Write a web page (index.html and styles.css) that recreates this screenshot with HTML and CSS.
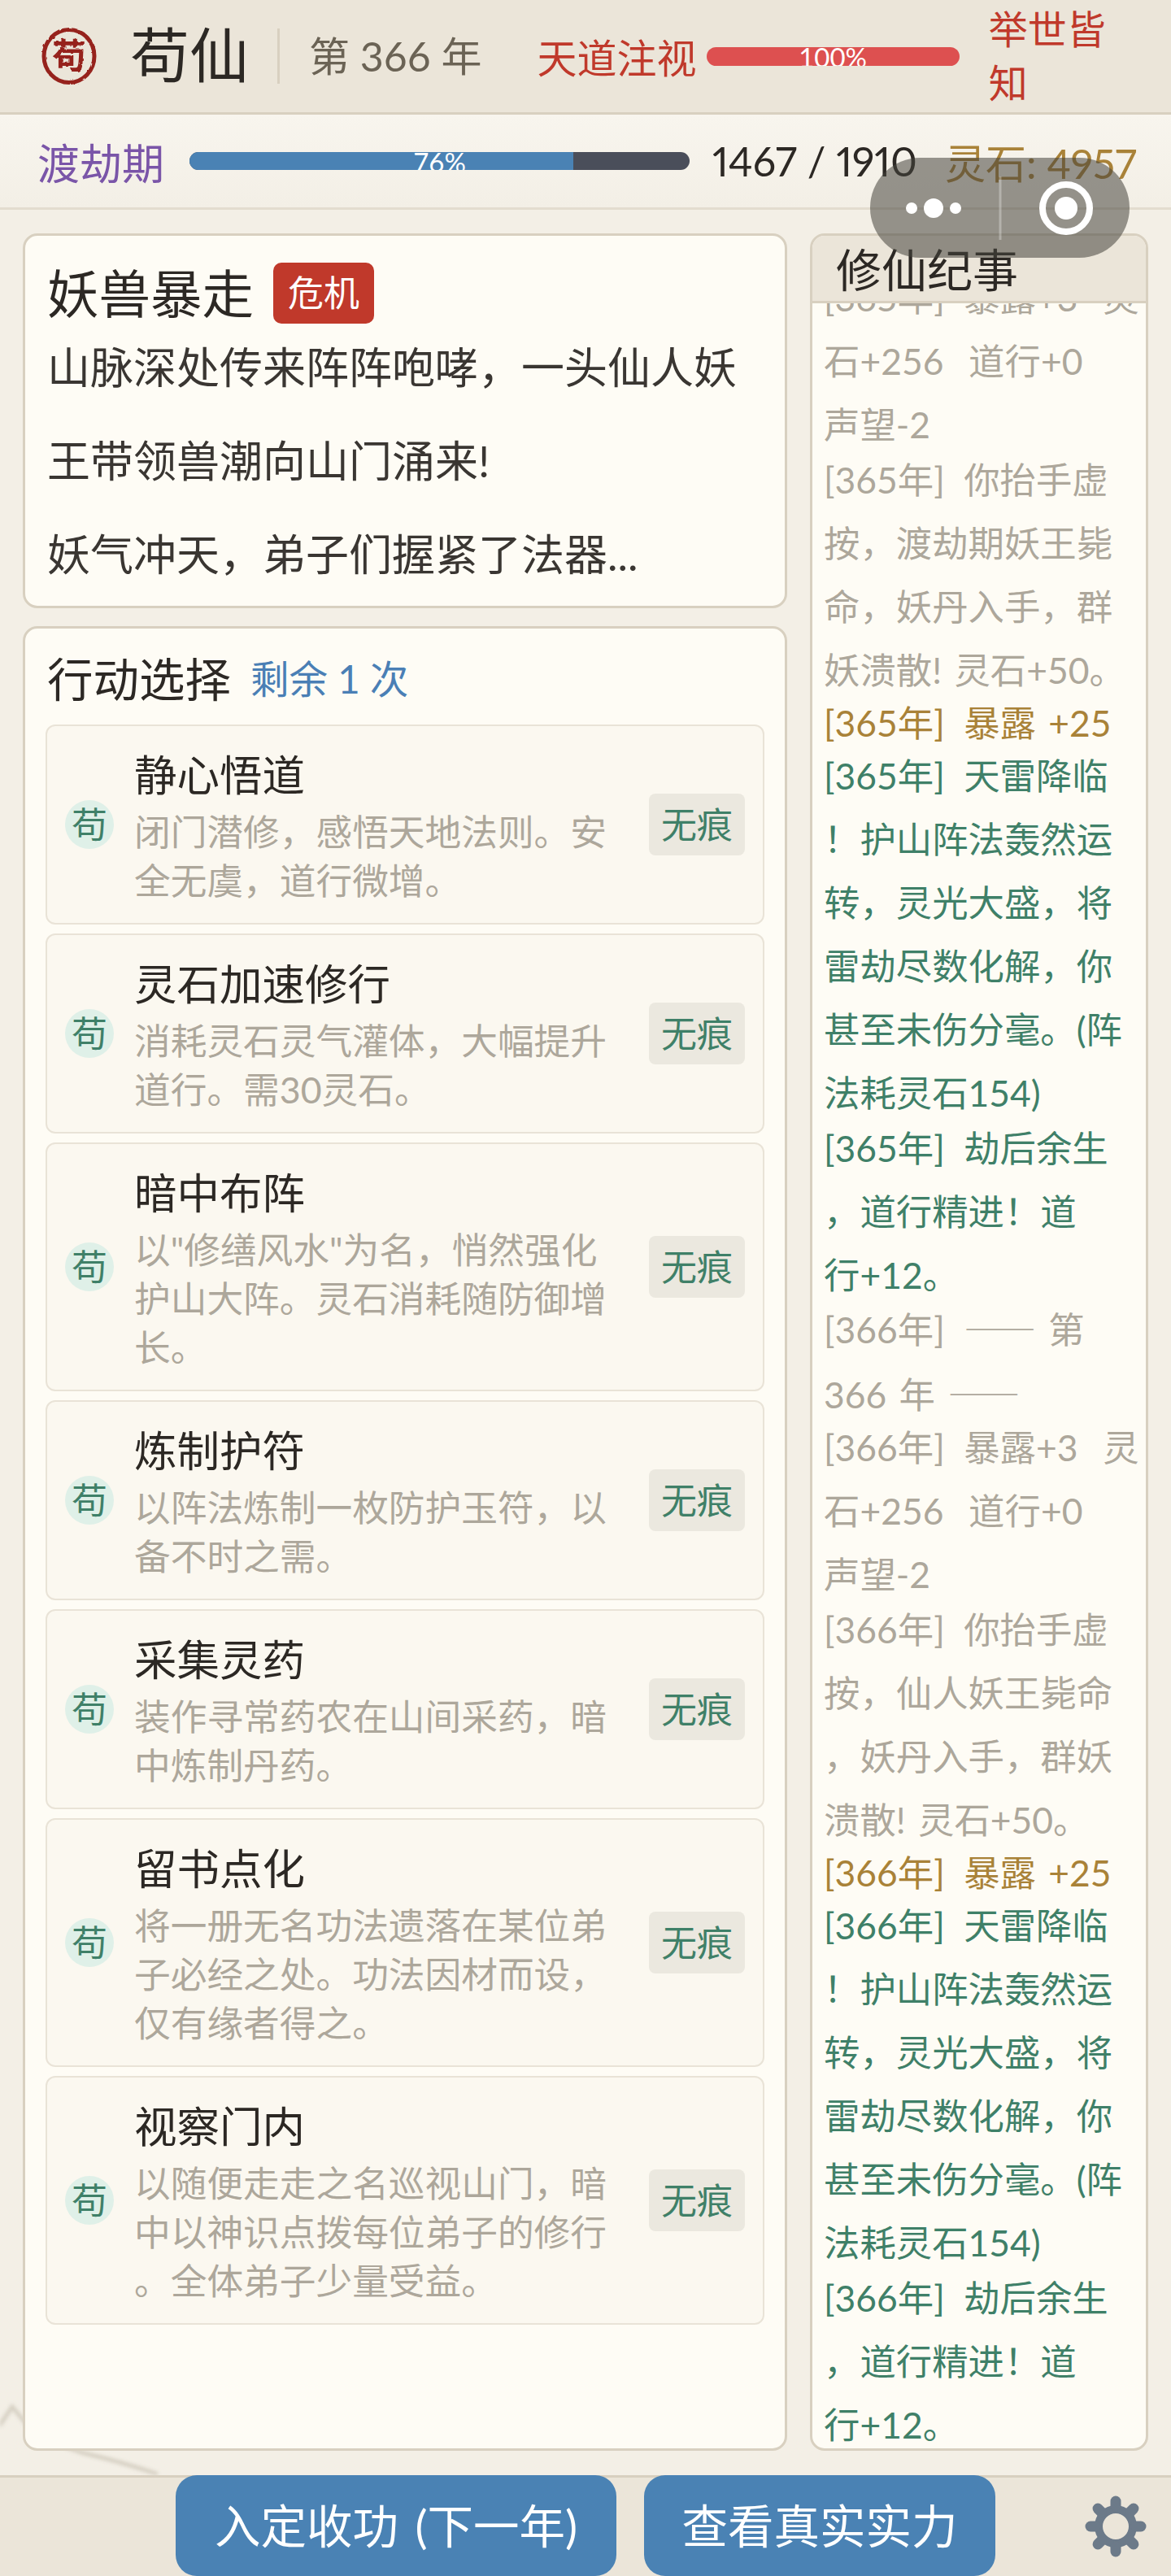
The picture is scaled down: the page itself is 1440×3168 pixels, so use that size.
FILE: index.html
```html
<!DOCTYPE html>
<html lang="zh-CN">
<head>
<meta charset="utf-8">
<title>苟仙</title>
<link rel="stylesheet" href="styles.css">
</head>
<body>
<div class="app">
  <header class="topbar">
    <svg class="seal" viewBox="0 0 68 70" aria-hidden="true">
      <defs>
        <filter id="ink" x="-10%" y="-10%" width="120%" height="120%">
          <feTurbulence type="fractalNoise" baseFrequency=".18" numOctaves="2" seed="4"/>
          <feDisplacementMap in="SourceGraphic" scale="3"/>
        </filter>
      </defs>
      <g filter="url(#ink)">
        <ellipse cx="34" cy="35" rx="31" ry="32.5" fill="none" stroke="#96231f" stroke-width="5"/>
        <text x="34" y="50" text-anchor="middle" class="seal-char">苟</text>
      </g>
    </svg>
    <h1 class="brand">苟仙</h1>
    <span class="year">第 366 年</span>
    <span class="heaven-label">天道注视</span>
    <div class="meter meter-heaven"><div class="meter-fill" style="width:100%"></div><span class="meter-text">100%</span></div>
    <span class="heaven-state">举世皆知</span>
  </header>

  <section class="statusbar">
    <span class="realm">渡劫期</span>
    <div class="meter meter-cultivation"><div class="meter-fill" style="width:76.8%"></div><span class="meter-text">76%</span></div>
    <span class="exp">1467 / 1910</span>
    <span class="stones">灵石: 4957</span>
  </section>

  <main class="board">
    <!-- veins in the paper behind the cards -->
    <svg class="paper-veins" viewBox="0 0 240 90" aria-hidden="true">
      <path d="M0 28 L15 6 L40 36 Q70 52 100 62 Q150 74 192 88" fill="none" stroke="#d6d0c3" stroke-width="5" stroke-linecap="round"/>
    </svg>
    <div class="left-col">
      <article class="card event">
        <div class="event-head">
          <h2 class="event-title">妖兽暴走</h2>
          <span class="badge">危机</span>
        </div>
        <p class="event-text">山脉深处传来阵阵咆哮，一头仙人妖王带领兽潮向山门涌来!</p>
        <p class="event-text">妖气冲天，弟子们握紧了法器...</p>
      </article>

      <section class="card actions">
        <div class="actions-head">
          <h2 class="actions-title">行动选择</h2>
          <span class="actions-left">剩余 1 次</span>
        </div>
        <ul class="action-list">
          <li class="action">
            <span class="action-icon">苟</span>
            <div class="action-body"><h3 class="action-name">静心悟道</h3><p class="action-desc">闭门潜修，感悟天地法则。安全无虞，道行微增。</p></div>
            <span class="action-tag">无痕</span>
          </li>
          <li class="action">
            <span class="action-icon">苟</span>
            <div class="action-body"><h3 class="action-name">灵石加速修行</h3><p class="action-desc">消耗灵石灵气灌体，大幅提升道行。需30灵石。</p></div>
            <span class="action-tag">无痕</span>
          </li>
          <li class="action">
            <span class="action-icon">苟</span>
            <div class="action-body"><h3 class="action-name">暗中布阵</h3><p class="action-desc">以"修缮风水"为名，悄然强化护山大阵。灵石消耗随防御增<wbr>长。</p></div>
            <span class="action-tag">无痕</span>
          </li>
          <li class="action">
            <span class="action-icon">苟</span>
            <div class="action-body"><h3 class="action-name">炼制护符</h3><p class="action-desc">以阵法炼制一枚防护玉符，以备不时之需。</p></div>
            <span class="action-tag">无痕</span>
          </li>
          <li class="action">
            <span class="action-icon">苟</span>
            <div class="action-body"><h3 class="action-name">采集灵药</h3><p class="action-desc">装作寻常药农在山间采药，暗中炼制丹药。</p></div>
            <span class="action-tag">无痕</span>
          </li>
          <li class="action">
            <span class="action-icon">苟</span>
            <div class="action-body"><h3 class="action-name">留书点化</h3><p class="action-desc">将一册无名功法遗落在某位弟子必经之处。功法因材而设，仅有缘者得之。</p></div>
            <span class="action-tag">无痕</span>
          </li>
          <li class="action">
            <span class="action-icon">苟</span>
            <div class="action-body"><h3 class="action-name">视察门内</h3><p class="action-desc">以随便走走之名巡视山门，暗中以神识点拨每位弟子的修行<wbr>。全体弟子少量受益。</p></div>
            <span class="action-tag">无痕</span>
          </li>
        </ul>
      </section>
    </div>

    <aside class="card chronicle">
      <h2 class="chronicle-title">修仙纪事</h2>
      <div class="log">
        <p class="entry"><span class="stamp">[365年]</span> 暴露+3&nbsp;&nbsp;灵<wbr><span class="nb">石+256&nbsp;&nbsp;道行+0</span>&nbsp;&nbsp;<wbr>声望-2</p>
        <p class="entry"><span class="stamp">[365年]</span> 你抬手虚<wbr>按，渡劫期妖王毙<wbr>命，妖丹入手，群<wbr>妖溃散! 灵石+50。</p>
        <p class="entry entry-short entry-gold"><span class="stamp">[365年]</span> 暴露 +25</p>
        <p class="entry entry-green"><span class="stamp">[365年]</span> 天雷降临<wbr>！护山阵法轰然运转，灵光大盛，将雷劫尽数化解，你甚至未伤分毫。(阵法耗灵石154)</p>
        <p class="entry entry-green"><span class="stamp">[365年]</span> 劫后余生<wbr>，道行精进！道<span class="nb">行+12。</span></p>
        <p class="entry entry-short"><span class="stamp">[366年]</span> <span class="wide-dash">——</span> 第 <span class="nb">366</span> 年 <span class="wide-dash">——</span></p>
        <p class="entry"><span class="stamp">[366年]</span> 暴露+3&nbsp;&nbsp;灵<wbr><span class="nb">石+256&nbsp;&nbsp;道行+0</span>&nbsp;&nbsp;<wbr>声望-2</p>
        <p class="entry"><span class="stamp">[366年]</span> 你抬手虚<wbr>按，仙人妖王毙命<wbr>，妖丹入手，群妖<wbr>溃散! 灵石+50。</p>
        <p class="entry entry-short entry-gold"><span class="stamp">[366年]</span> 暴露 +25</p>
        <p class="entry entry-green"><span class="stamp">[366年]</span> 天雷降临<wbr>！护山阵法轰然运转，灵光大盛，将雷劫尽数化解，你甚至未伤分毫。(阵法耗灵石154)</p>
        <p class="entry entry-green"><span class="stamp">[366年]</span> 劫后余生<wbr>，道行精进！道<span class="nb">行+12。</span></p>
      </div>
    </aside>
  </main>

  <footer class="footbar">
    <button class="btn" type="button">入定收功 (下一年)</button>
    <button class="btn" type="button">查看真实实力</button>
    <svg class="gear" viewBox="-38 -38 76 76" aria-hidden="true">
      <circle r="21" fill="none" stroke="#6c7a89" stroke-width="10"/>
      <g stroke="#6c7a89" stroke-width="13" stroke-linecap="round">
        <line y1="-25" y2="-31"/>
        <line y1="-25" y2="-31" transform="rotate(45)"/>
        <line y1="-25" y2="-31" transform="rotate(90)"/>
        <line y1="-25" y2="-31" transform="rotate(135)"/>
        <line y1="-25" y2="-31" transform="rotate(180)"/>
        <line y1="-25" y2="-31" transform="rotate(225)"/>
        <line y1="-25" y2="-31" transform="rotate(270)"/>
        <line y1="-25" y2="-31" transform="rotate(315)"/>
      </g>
    </svg>
  </footer>

  <!-- host app capsule floating over the page -->
  <div class="capsule">
    <svg class="capsule-icons" viewBox="0 0 319 123" aria-hidden="true">
      <circle cx="51" cy="62" r="7" fill="#fff"/>
      <circle cx="78" cy="62" r="12" fill="#fff"/>
      <circle cx="105" cy="62" r="7" fill="#fff"/>
      <line x1="160" y1="23" x2="160" y2="101" stroke="#fff" stroke-opacity=".3" stroke-width="3"/>
      <circle cx="241" cy="62" r="29" fill="none" stroke="#fff" stroke-width="8"/>
      <circle cx="241" cy="62" r="14" fill="#fff"/>
    </svg>
  </div>
</div>
</body>
</html>
```

FILE: styles.css
```css
* { box-sizing: border-box; }

html, body { margin: 0; padding: 0; }

body {
  font-family: "Lato", "Noto Sans CJK SC", sans-serif;
  color: #2c2824;
  background: #f3efe6;
}

h1, h2, h3, p, ul { margin: 0; padding: 0; font-weight: 400; }
ul { list-style: none; }

.app {
  position: relative;
  width: 1440px;
  height: 3168px;
  display: flex;
  flex-direction: column;
  overflow: hidden;
}

/* top bar */
.topbar {
  height: 141px;
  flex: none;
  display: flex;
  align-items: center;
  padding-left: 51px;
  background: #ebe5d9;
  border-bottom: 3px solid #d8d0c0;
}

.seal { width: 68px; height: 70px; flex: none; }
.seal-char { font-size: 42px; font-weight: 700; fill: #96231f; font-family: "Noto Sans CJK SC", sans-serif; }

.brand {
  margin-left: 41px;
  width: 184px;
  height: 68px;
  font-size: 73px;
  line-height: 64px;
  border-right: 3px solid #d8d0c0;
  flex: none;
}

.year { margin: 0 0 6px 36px; font-size: 50px; color: #6b6355; flex: none; white-space: nowrap; }

.heaven-label { margin: 0 0 2px 68px; font-size: 49px; color: #c0392b; flex: none; white-space: nowrap; }

.heaven-state {
  margin-left: 36px;
  width: 150px;
  font-size: 48px;
  line-height: 66px;
  color: #c0392b;
  flex: none;
}

/* progress meters */
.meter {
  position: relative;
  overflow: hidden;
  background: #4a4e5a;
  flex: none;
}

.meter-heaven { margin-left: 12px; width: 311px; height: 23px; border-radius: 12px; }
.meter-cultivation { margin-left: 31px; width: 615px; height: 22px; border-radius: 11px; }

.meter-heaven .meter-fill { background: #dd5050; }
.meter-cultivation .meter-fill { background: #4a82b4; }

.meter-fill { height: 100%; }

.meter-text {
  position: absolute;
  inset: 0;
  text-align: center;
  font-size: 33px;
  line-height: 24px;
  color: #fff;
}

/* cultivation status */
.statusbar {
  height: 117px;
  flex: none;
  display: flex;
  align-items: center;
  padding-left: 46px;
  background: linear-gradient(#f8f5ee, #f3efe6);
  border-bottom: 3px solid #e3dccf;
}

.realm { font-size: 52px; color: #7a55a8; flex: none; }
.exp {
  margin-left: 28px;
  font-size: 50px;
  font-variant-numeric: proportional-nums;
  flex: none;
  white-space: nowrap;
}
.stones {
  margin-left: 34px;
  font-size: 50px;
  font-variant-numeric: proportional-nums;
  color: #a98238;
  flex: none;
  white-space: nowrap;
}

/* main board */
.board {
  position: relative;
  flex: 1;
  min-height: 0;
  display: flex;
  gap: 28px;
  padding: 29px 28px 30px;
}

.paper-veins {
  position: absolute;
  left: 0;
  bottom: 0;
  width: 240px;
  height: 90px;
  filter: blur(2px);
}

.left-col {
  position: relative;
  width: 940px;
  flex: none;
  display: flex;
  flex-direction: column;
  gap: 22px;
}

.card {
  position: relative;
  background: #fefcf5;
  border: 3px solid #d8d0c0;
  border-radius: 18px;
}

/* event card */
.event { padding: 33px 27px 22px; height: 461px; flex: none; }

.event-head { display: flex; align-items: center; gap: 24px; height: 75px; }
.event-title { font-size: 63.5px; line-height: 75px; }
.badge {
  width: 124px;
  height: 75px;
  border-radius: 10px;
  background: #c0392b;
  color: #fff;
  font-size: 44px;
  line-height: 75px;
  text-align: center;
}

.event-head + .event-text { margin-top: -4px; }
.event-text { font-size: 53px; line-height: 115px; color: #3a3632; }

/* actions card */
.actions { flex: 1; min-height: 0; padding: 0 25px; }

.actions-head {
  height: 118px;
  display: flex;
  align-items: center;
  gap: 24px;
  padding-left: 2px;
}
.actions-title { font-size: 56.5px; }
.actions-left { font-size: 47.5px; color: #4a7fb5; }

.action-list { display: flex; flex-direction: column; gap: 11px; }

.action {
  display: flex;
  align-items: center;
  padding: 22px;
  background: #fbf8f0;
  border: 2px solid #e9e3d7;
  border-radius: 12px;
}

.action-icon {
  width: 60px;
  height: 60px;
  flex: none;
  border-radius: 50%;
  background: #dff0e8;
  color: #3f8068;
  font-size: 44px;
  line-height: 60px;
  text-align: center;
}

.action-body { width: 600px; margin-left: 25px; flex: none; }
.action-name { font-size: 52.5px; line-height: 76px; padding-bottom: 2px; }
.action-desc { font-size: 44.7px; line-height: 60px; color: #ada79b; }

.action-tag {
  margin-left: auto;
  width: 118px;
  height: 76px;
  flex: none;
  border-radius: 8px;
  background: #ebe8df;
  color: #3f8068;
  font-size: 44px;
  line-height: 76px;
  text-align: center;
}

/* chronicle panel */
.chronicle {
  flex: 1;
  min-width: 0;
  display: flex;
  flex-direction: column;
  overflow: hidden;
}

.chronicle-title {
  height: 83px;
  flex: none;
  padding-left: 29px;
  font-size: 56px;
  line-height: 84px;
  background: #ebe5d9;
  border-bottom: 3px solid #d8d0c0;
}

.log {
  flex: 1;
  min-height: 0;
  overflow: hidden;
  display: flex;
  flex-direction: column;
  justify-content: flex-end;
  padding: 0 7px 0 14px;
}

.entry {
  flex: none;
  font-size: 44.4px;
  line-height: 78px;
  word-spacing: 4px;
  margin-bottom: -10px;
  color: #ada79b;
}

/* one-line notices sit a little closer to their neighbours */
.entry-short { margin-top: -3px; margin-bottom: -13px; }

.stamp { margin-right: 8px; }
.nb { white-space: nowrap; }
.wide-dash { font-family: "Noto Sans CJK SC", sans-serif; }
.entry-gold { color: #a98238; }
.entry-green { color: #3f8068; }

/* bottom bar */
.footbar {
  height: 124px;
  flex: none;
  display: flex;
  align-items: stretch;
  padding-left: 216px;
  background: #ebe5d9;
  border-top: 3px solid #d8d0c0;
}

.btn {
  margin-top: -3px;
  padding: 0 0 6px;
  border: 0;
  border-radius: 26px;
  background: #4a82b4;
  color: #fff;
  font-family: inherit;
  font-size: 56.5px;
  word-spacing: 6px;
  white-space: nowrap;
}
.btn:first-child { width: 542px; }
.btn:nth-child(2) { width: 432px; margin-left: 34px; }

.gear { width: 76px; height: 76px; margin: 22px 0 0 110px; flex: none; }

/* host capsule */
.capsule {
  position: absolute;
  left: 1070px;
  top: 194px;
  width: 319px;
  height: 123px;
  border-radius: 62px;
  background: rgba(70, 68, 60, .55);
}
.capsule-icons { display: block; width: 100%; height: 100%; }
```
